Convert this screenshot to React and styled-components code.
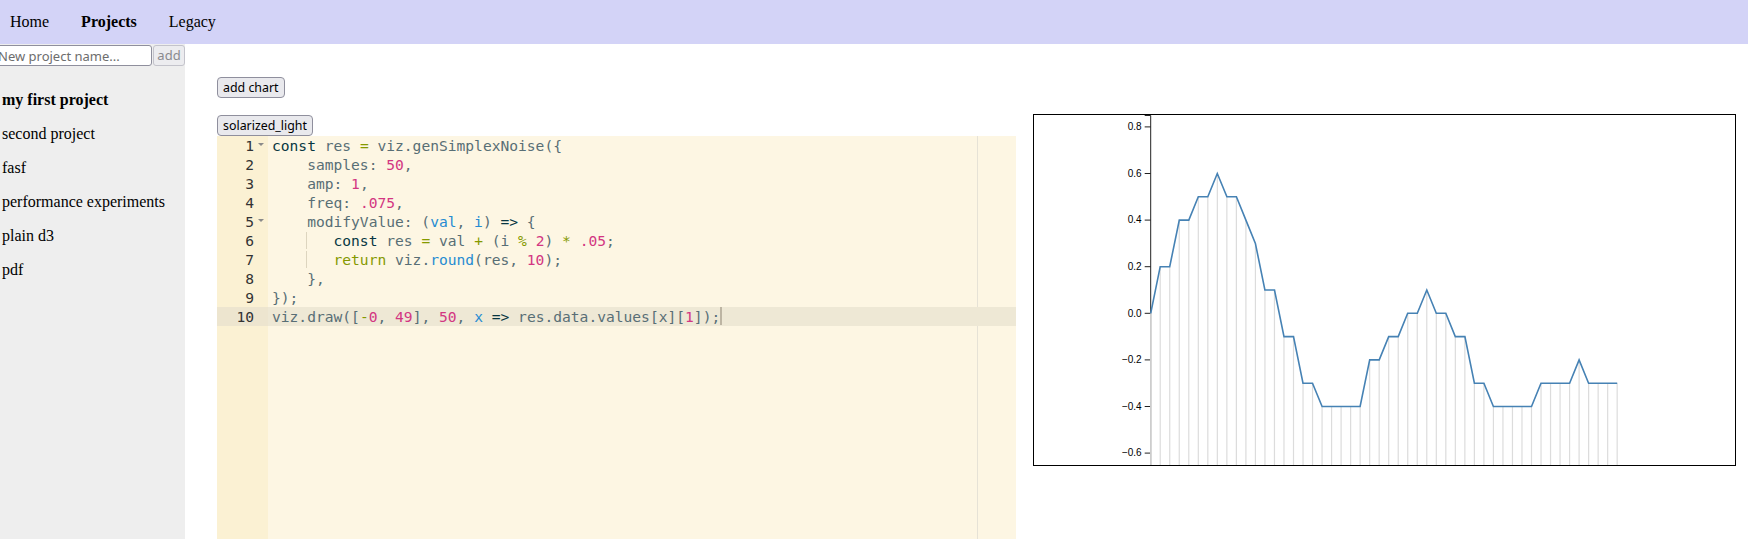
import { Component } from 'react';
import styled, { createGlobalStyle } from 'styled-components';

const projects = ['my first project', 'second project', 'fasf', 'performance experiments', 'plain d3', 'pdf'];

const data = [
  0, 0.2, 0.2, 0.4, 0.4, 0.5, 0.5, 0.6, 0.5, 0.5,
  0.4, 0.3, 0.1, 0.1, -0.1, -0.1, -0.3, -0.3, -0.4, -0.4,
  -0.4, -0.4, -0.4, -0.2, -0.2, -0.1, -0.1, 0, 0, 0.1,
  0, 0, -0.1, -0.1, -0.3, -0.3, -0.4, -0.4, -0.4, -0.4,
  -0.4, -0.3, -0.3, -0.3, -0.3, -0.2, -0.3, -0.3, -0.3, -0.3,
];

const ticks = [0.8, 0.6, 0.4, 0.2, 0, -0.2, -0.4, -0.6];

// each line: list of [kind, text]
const code = [
  { fold: true, tokens: [['storage', 'const'], ['text', ' res '], ['op', '='], ['text', ' viz.genSimplexNoise({']] },
  { tokens: [['text', '    samples: '], ['num', '50'], ['text', ',']] },
  { tokens: [['text', '    amp: '], ['num', '1'], ['text', ',']] },
  { tokens: [['text', '    freq: '], ['num', '.075'], ['text', ',']] },
  { fold: true, tokens: [['text', '    modifyValue: ('], ['param', 'val'], ['text', ', '], ['param', 'i'], ['text', ') '], ['storage', '=>'], ['text', ' {']] },
  { guide: true, tokens: [['text', '   '], ['storage', 'const'], ['text', ' res '], ['op', '='], ['text', ' val '], ['op', '+'], ['text', ' (i '], ['op', '%'], ['text', ' '], ['num', '2'], ['text', ') '], ['op', '*'], ['text', ' '], ['num', '.05'], ['text', ';']] },
  { guide: true, tokens: [['text', '   '], ['kw', 'return'], ['text', ' viz.'], ['fn', 'round'], ['text', '(res, '], ['num', '10'], ['text', ');']] },
  { tokens: [['text', '    },']] },
  { tokens: [['text', '});']] },
  { active: true, tokens: [['text', 'viz.draw(['], ['op', '-'], ['num', '0'], ['text', ', '], ['num', '49'], ['text', '], '], ['num', '50'], ['text', ', '], ['param', 'x'], ['text', ' '], ['storage', '=>'], ['text', ' res.data.values[x]['], ['num', '1'], ['text', ']);']] },
];

const colors = {
  text: '#586e75',
  storage: '#073642',
  op: '#859900',
  kw: '#859900',
  num: '#d33682',
  param: '#268bd2',
  fn: '#268bd2',
};

const AX = 116.7;
const Y0 = 198.3;
const K = 233;
const STEP = 9.52;
const CH = 350;

class App extends Component {
  render() {
    const pts = data.map((v, i) => [AX + i * STEP, Y0 - v * K]);
    const line = pts.map((p, i) => (i ? 'L' : 'M') + p[0].toFixed(1) + ',' + p[1].toFixed(1)).join('');
    return (
      <>
        <GlobalStyle />
        <Nav>
          <NavLink href="#">Home</NavLink>
          <NavLink href="#" $active>Projects</NavLink>
          <NavLink href="#">Legacy</NavLink>
        </Nav>
        <Layout>
          <Sidebar>
            <NewProject>
              <NameInput placeholder="New project name..." />
              <SmallButton disabled>add</SmallButton>
            </NewProject>
            <ProjectList>
              {projects.map((p, i) => (
                <ProjectItem key={p} $active={i === 0}>{p}</ProjectItem>
              ))}
            </ProjectList>
          </Sidebar>
          <Main>
            <Button>add chart</Button>
            <Workspace>
              <EditorColumn>
                <Button>solarized_light</Button>
                <Editor>
                  <Gutter>
                    {code.map((l, i) => (
                      <GutterCell key={i} $active={l.active}>
                        {i + 1}
                        <FoldSlot>{l.fold && <FoldArrow />}</FoldSlot>
                      </GutterCell>
                    ))}
                  </Gutter>
                  <Content>
                    <PrintMargin />
                    {code.map((l, i) => (
                      <CodeLine key={i} $active={l.active}>
                        {l.guide && <IndentGuide>{'    '}</IndentGuide>}
                        {l.tokens.map(([k, t], j) => (
                          <Token key={j} $kind={k}>{t}</Token>
                        ))}
                        {l.active && <Cursor />}
                      </CodeLine>
                    ))}
                  </Content>
                </Editor>
              </EditorColumn>
              <ChartBox>
                <svg width="701" height={CH}>
                  <path d={`M${AX - 6},0.5H${AX}V${CH}`} fill="none" stroke="#222" strokeWidth="1" />
                  {ticks.map((t) => {
                    const y = Y0 - t * K;
                    return (
                      <g key={t}>
                        <line x1={AX - 6} x2={AX} y1={y} y2={y} stroke="#222" />
                        <TickLabel x={AX - 9} y={y} dy="0.32em" textAnchor="end">
                          {(t < 0 ? '\u2212' : '') + Math.abs(t).toFixed(1)}
                        </TickLabel>
                      </g>
                    );
                  })}
                  {pts.map((p, i) => (
                    <line key={i} x1={p[0]} x2={p[0]} y1={p[1]} y2={CH} stroke="#dcdcdc" strokeWidth="1.2" />
                  ))}
                  <path d={line} fill="none" stroke="#4682b4" strokeWidth="1.6" />
                </svg>
              </ChartBox>
            </Workspace>
          </Main>
        </Layout>
      </>
    );
  }
}

const GlobalStyle = createGlobalStyle`
  body {
    margin: 0;
    font-family: "Liberation Serif", serif;
    background: #fff;
    overflow: hidden;
  }
`;

const Nav = styled.nav`
  height: 44px;
  background: #d3d3f7;
  display: flex;
  align-items: center;
  padding-left: 10px;
  gap: 32px;
`;

const NavLink = styled.a`
  font-size: 16px;
  color: #000;
  text-decoration: none;
  font-weight: ${(p) => (p.$active ? 700 : 400)};
`;

const Layout = styled.div`
  display: flex;
  height: 495px;
  overflow: hidden;
`;

const Sidebar = styled.aside`
  width: 185px;
  flex-shrink: 0;
  background: #eee;
  overflow: hidden;
`;

const NewProject = styled.div`
  display: flex;
  margin-top: 1px;
  margin-left: -6px;
`;

const NameInput = styled.input`
  width: 158px;
  flex-shrink: 0;
  height: 21px;
  box-sizing: border-box;
  border: 1px solid #8f8f9d;
  border-radius: 3px;
  padding: 0 3px;
  font-family: "Noto Sans", sans-serif;
  font-size: 13px;
  background: #fff;
  &::placeholder { color: #6d6d6d; }
`;

const SmallButton = styled.button`
  flex-shrink: 0;
  width: 32px;
  height: 21px;
  margin-left: 1px;
  padding: 0;
  border: 1px solid #c3c3cb;
  border-radius: 3px;
  background: #ececef;
  color: #8a8a8e;
  font-family: "Noto Sans", sans-serif;
  font-size: 13px;
  line-height: 19px;
`;

const ProjectList = styled.ul`
  list-style: none;
  margin: 0;
  padding: 17px 0 0 2px;
`;

const ProjectItem = styled.li`
  height: 34px;
  line-height: 34px;
  font-size: 16px;
  color: #000;
  white-space: nowrap;
  font-weight: ${(p) => (p.$active ? 700 : 400)};
`;

const Main = styled.main`
  flex: 1;
  padding: 33px 0 0 32px;
  display: flex;
  flex-direction: column;
  align-items: flex-start;
`;

const Button = styled.button`
  height: 21px;
  padding: 0 5px;
  border: 1px solid #8f8f9d;
  border-radius: 4px;
  background: #e9e9ed;
  color: #000;
  font-family: "Noto Sans", sans-serif;
  font-size: 12.4px;
  line-height: 19px;
`;

const Workspace = styled.div`
  display: flex;
  gap: 17px;
  margin-top: 16px;
  align-items: flex-start;
`;

const EditorColumn = styled.div`
  width: 799px;
  display: flex;
  flex-direction: column;
  align-items: flex-start;
  margin-top: 1px;
`;

const Editor = styled.div`
  width: 100%;
  height: 420px;
  display: flex;
  font-family: "DejaVu Sans Mono", monospace;
  font-size: 14.6px;
  line-height: 19px;
`;

const Gutter = styled.div`
  width: 51px;
  flex-shrink: 0;
  background: #fbf1d3;
  color: #333;
`;

const GutterCell = styled.div`
  height: 19px;
  display: flex;
  justify-content: flex-end;
  align-items: center;
  background: ${(p) => (p.$active ? '#ede5cf' : 'transparent')};
`;

const FoldSlot = styled.span`
  width: 14px;
  height: 19px;
  display: flex;
  align-items: center;
  justify-content: center;
`;

const FoldArrow = styled.span`
  width: 0;
  height: 0;
  border-left: 3px solid transparent;
  border-right: 3px solid transparent;
  border-top: 3px solid #8a8a8a;
  margin-top: -2px;
`;

const Content = styled.div`
  flex: 1;
  position: relative;
  background: #fdf6e3;
`;

const PrintMargin = styled.div`
  position: absolute;
  left: 709px;
  top: 0;
  bottom: 0;
  width: 1px;
  background: #e6e2d6;
`;

const CodeLine = styled.div`
  position: relative;
  height: 19px;
  padding-left: 4px;
  white-space: pre;
  color: ${colors.text};
  background: ${(p) => (p.$active ? '#eee8d5' : 'transparent')};
`;

const IndentGuide = styled.span`
  background: linear-gradient(to right, transparent calc(100% - 1px), #ddd5bf calc(100% - 1px));
`;

const Token = styled.span`
  color: ${(p) => colors[p.$kind]};
`;

const Cursor = styled.span`
  display: inline-block;
  width: 2px;
  height: 18px;
  vertical-align: top;
  background: #bdb5a3;
`;

const ChartBox = styled.div`
  width: 701px;
  height: ${CH}px;
  border: 1px solid #000;
  background: #fff;
  svg { display: block; }
`;

const TickLabel = styled.text`
  font-family: "Liberation Sans", Arial, sans-serif;
  font-size: 10px;
  fill: #000;
`;

export default App;
